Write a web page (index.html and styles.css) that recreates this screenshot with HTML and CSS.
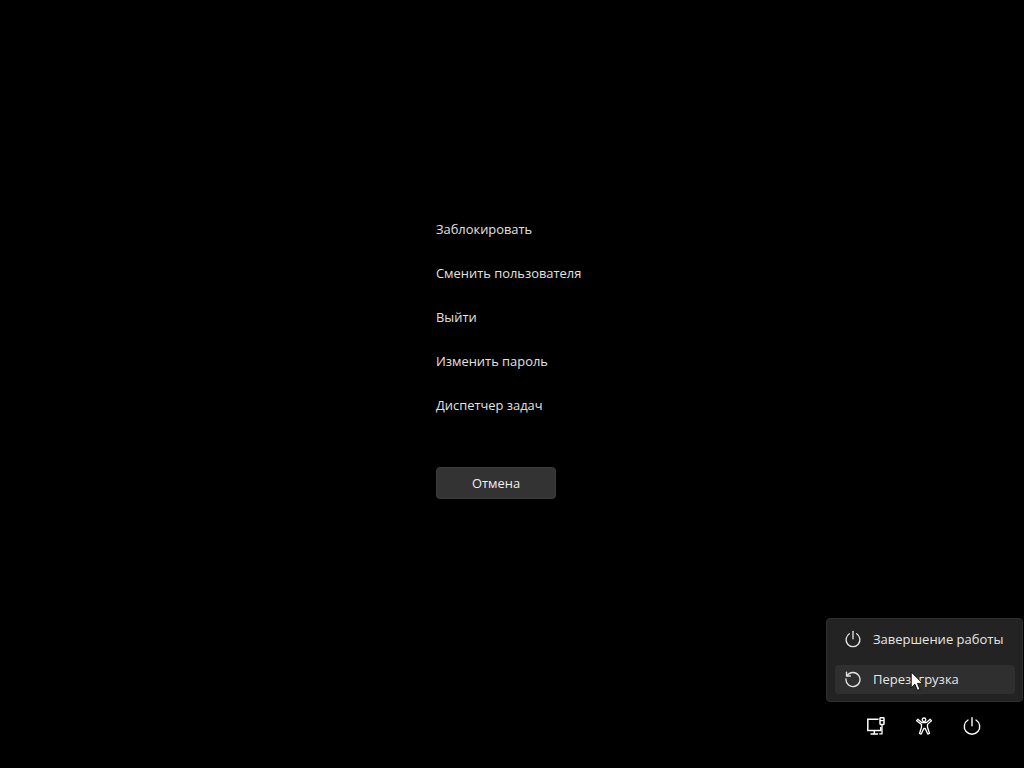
FILE: index.html
```html
<!DOCTYPE html>
<html lang="ru">
<head>
<meta charset="utf-8">
<title>Параметры безопасности</title>
<link rel="stylesheet" href="styles.css">
</head>
<body>
<div class="screen">
  <main class="options">
    <ul class="option-list">
      <li class="option">Заблокировать</li>
      <li class="option">Сменить пользователя</li>
      <li class="option">Выйти</li>
      <li class="option">Изменить пароль</li>
      <li class="option">Диспетчер задач</li>
    </ul>
    <button class="cancel" type="button">Отмена</button>
  </main>
  <footer class="tray">
    <span class="tray-icon">
      <svg width="20" height="20" viewBox="0 0 20 20" fill="none" stroke="#fff" stroke-width="1.5">
        <path d="M12.500 3.200H1.800v11.300h13V11"/>
        <path d="M8.300 14.500v3.300M4.500 18h7.600"/>
        <rect x="14" y="1.800" width="4" height="6.600" rx=".6"/>
        <path d="M14 4.600h4M16 8.400v9.400h-2.800" stroke-width="1.300"/>
      </svg>
    </span>
    <span class="tray-icon">
      <svg width="20" height="20" viewBox="0 0 20 20" fill="none" stroke="#fff" stroke-width="1.300" stroke-linejoin="round">
        <circle cx="10" cy="3.800" r="1.800"/>
        <path d="M3.800 3.300 7.600 6.500h4.800l3.800-3.200 1.200 1.400-3.900 3.700v2.800l2 6.300-1.700.6-2.600-5.600H9.800l-2.600 5.600-1.700-.6 2-6.300V8.400L2.600 4.700z"/>
      </svg>
    </span>
    <span class="tray-icon">
      <svg width="20" height="20" viewBox="0 0 20 20" fill="none" stroke="#fff" stroke-width="1.400" stroke-linecap="round">
        <path d="M6 4a7.700 7.700 0 1 0 8 0"/>
        <path d="M10 1.800v8"/>
      </svg>
    </span>
    <div class="flyout">
      <div class="flyout-item">
        <svg width="18" height="18" viewBox="0 0 20 20" fill="none" stroke="#e2e2e2" stroke-width="1.500" stroke-linecap="round">
          <path d="M6 4.200a7.700 7.700 0 1 0 8 0"/>
          <path d="M10 1.500v8.300"/>
        </svg>
        <span class="flyout-label">Завершение работы</span>
      </div>
      <div class="flyout-item flyout-item-active">
        <svg width="18" height="18" viewBox="0 0 20 20" fill="none" stroke="#e2e2e2" stroke-width="1.500" stroke-linecap="round" stroke-linejoin="round">
          <path d="M3.400 6.400A7.800 7.800 0 1 1 2.200 10"/>
          <path d="M2.800 2.400v4.300h4.300"/>
        </svg>
        <span class="flyout-label">Перезагрузка</span>
      </div>
      <svg class="cursor" width="13" height="21" viewBox="0 0 12 20">
        <path d="M1 1v15l3.500-3.400 2.400 5.800 2.400-1-2.400-5.600h4.800z" fill="#fff" stroke="#000" stroke-width=".8"/>
      </svg>
    </div>
  </footer>
</div>
</body>
</html>
```
FILE: styles.css
```css
* { box-sizing: border-box; }

html, body {
  margin: 0;
  background: #000;
}

.screen {
  width: 1024px;
  height: 768px;
  display: flex;
  flex-direction: column;
  font-family: "Open Sans", "Noto Sans", sans-serif;
  font-size: 12.9px;
  color: #e2e2e2;
  overflow: hidden;
}

.options {
  padding: 207px 0 0 436px;
}

.option-list {
  margin: 0;
  padding: 0;
  list-style: none;
}

.option {
  height: 44px;
  line-height: 44px;
}

.cancel {
  display: block;
  width: 120px;
  height: 32px;
  margin-top: 40px;
  padding: 0;
  font: inherit;
  color: #f0f0f0;
  background: #333;
  border: 1px solid #3c3c3c;
  border-radius: 4px;
}

.tray {
  position: relative;
  margin-top: auto;
  margin-bottom: 32px;
  padding-right: 42px;
  display: flex;
  justify-content: flex-end;
  gap: 28px;
}

.tray-icon {
  width: 20px;
  height: 20px;
  display: block;
}

.tray-icon svg { display: block; }

.flyout {
  position: absolute;
  right: 1px;
  bottom: 34px;
  width: 197px;
  height: 84px;
  padding: 6px 7px 7px 8px;
  display: flex;
  flex-direction: column;
  gap: 11px;
  background: #232323;
  border: 1px solid #2e2e2e;
  border-radius: 4px;
}

.flyout-item {
  height: 29px;
  flex: none;
  padding: 0 0 2px 9px;
  display: flex;
  align-items: center;
  gap: 11px;
  color: #e6e6e6;
  border-radius: 4px;
  white-space: nowrap;
}

.flyout-label {
  font-size: 13px;
}

.flyout-item-active {
  background: #2f2f2f;
}

.cursor {
  position: absolute;
  left: 83px;
  top: 52px;
}
```
